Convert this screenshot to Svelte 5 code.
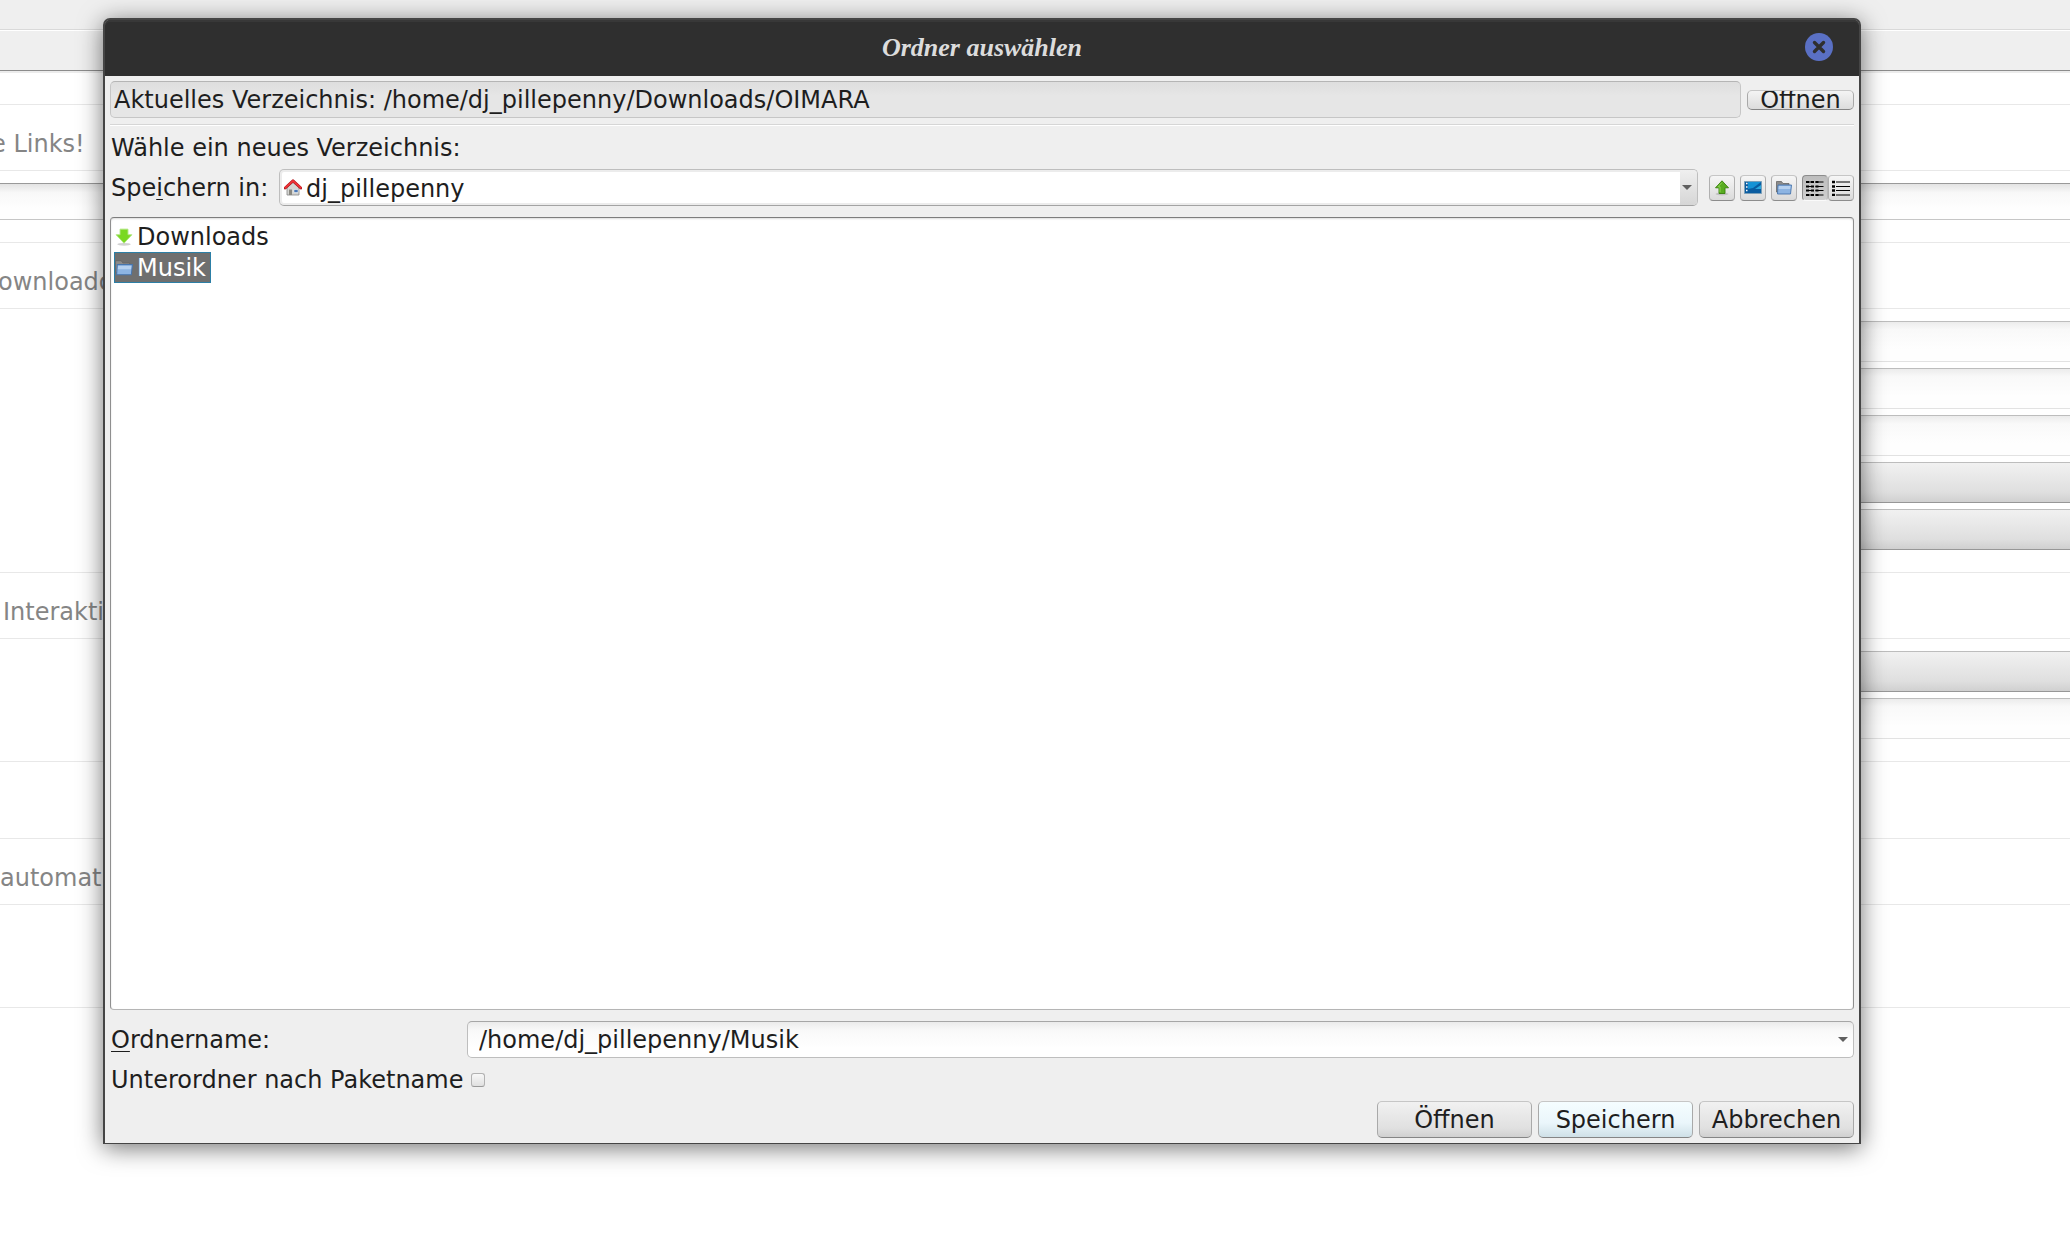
<script lang="ts">
  type Control = 'field' | 'button';
  type Section = { caption: string; indent: number; wide: boolean; controls: Control[] };

  const upper: Section[] = [
    { caption: 'e Links!', indent: -9, wide: true, controls: ['field'] },
    {
      caption: 'ownloado',
      indent: -2,
      wide: false,
      controls: ['field', 'field', 'field', 'button', 'button']
    },
    { caption: 'Interaktio', indent: 3, wide: false, controls: ['button', 'field'] }
  ];

  const entries = ['Downloads', 'Musik'];
  const actions = ['Öffnen', 'Speichern', 'Abbrechen'];

  let selected = $state('Musik');
  let view = $state('list');
  let subfolder = $state(false);
  let folder = $derived(`/home/dj_pillepenny/${selected}`);
</script>

{#snippet folderIcon()}
  <path d="M.5 12V1.500h5l1.500 2h6V12z" fill="#8b8b8b" stroke="#666" stroke-width=".8" />
  <path d="M2 5h13.500L14.500 14H1.500z" fill="#8db4e2" stroke="#4775ad" stroke-width=".9" />
  <path d="M2.800 6h11.800l-.4 3H2.500z" fill="#b5d0ef" />
{/snippet}

<div class="desktop">
  <div class="strip"></div>
  <div class="strip tabs"></div>

  <main class="settings">
    {#each upper as section}
      <section>
        <h2><span style="margin-left: {section.indent}px">{section.caption}</span></h2>
        <div class="controls" class:wide={section.wide}>
          {#each section.controls as control}
            <div class={control}></div>
          {/each}
        </div>
      </section>
    {/each}
    <div class="spacer"></div>
    <section class="last">
      <h2><span>automatis</span></h2>
    </section>
  </main>

  <div class="dialog" role="dialog" aria-labelledby="dialog-title">
    <header>
      <h1 id="dialog-title">Ordner auswählen</h1>
      <button class="close" aria-label="Schließen">
        <svg viewBox="0 0 28 28">
          <circle cx="14" cy="14" r="14" fill="#5a70c4" />
          <path d="M9.500 9.500l9 9M18.500 9.500l-9 9" stroke="#2f2f2f" stroke-width="3.400" stroke-linecap="round" />
        </svg>
      </button>
    </header>

    <div class="content">
      <div class="row">
        <div class="current">Aktuelles Verzeichnis: /home/dj_pillepenny/Downloads/OIMARA</div>
        <button class="push flat">Öffnen</button>
      </div>
      <hr />
      <p>Wähle ein neues Verzeichnis:</p>

      <div class="row">
        <label class="in-label" for="location">Spe<u>i</u>chern in:</label>
        <div class="combo location">
          <svg class="icon" viewBox="0 0 18 18">
            <path d="M3 8.500L9 3.500l6 5V16H3z" fill="#d5d5d2" stroke="#858585" stroke-width=".8" />
            <path d="M5 10.500h3V16H5z" fill="#8a8881" />
            <path d="M10 10.500h4v3h-4z" fill="#4a78b8" stroke="#fff" stroke-width=".5" />
            <path d="M1.200 9L9 1.800 16.800 9" fill="none" stroke="#b01218" stroke-width="2.800" stroke-linejoin="round" stroke-linecap="round" />
            <path d="M1.400 8.700L9 1.800 16.600 8.700" fill="none" stroke="#f03438" stroke-width="1.800" stroke-linejoin="round" stroke-linecap="round" />
          </svg>
          <select id="location">
            <option>dj_pillepenny</option>
          </select>
          <span class="drop"><i class="arrow"></i></span>
        </div>
        <div class="tools">
          <button aria-label="Übergeordneter Ordner">
            <svg viewBox="0 0 18 16">
              <ellipse cx="9" cy="14" rx="6.500" ry="1.500" fill="#000" opacity=".14" />
              <path d="M9 .8L15.500 7.800H12v5.700H6V7.800H2.500z" fill="#58ac20" stroke="#37800b" stroke-width=".9" stroke-linejoin="round" />
              <path d="M9 2.500L5 6.800h2v5.500" stroke="#8cd450" />
            </svg>
          </button>
          <button aria-label="Schreibtisch">
            <svg viewBox="0 0 18 16">
              <path d="M.5 1.500h17v12H.5z" fill="#0a5ca0" stroke="#7b9fb8" />
              <path d="M4 2h13L9 8l-5 1z" fill="#1692d4" />
              <path d="M11 9l6-4v4z" fill="#29a7dc" />
              <path d="M2 3.500h1.500M2 7h1.500M2 10.500h1.500" stroke="#fff" stroke-width="1.500" />
            </svg>
          </button>
          <button aria-label="Neuer Ordner">
            <svg viewBox="0 0 16 16">{@render folderIcon()}</svg>
          </button>
          <div class="views">
            <button class:pressed={view === 'list'} aria-label="Liste" onclick={() => (view = 'list')}>
              <svg viewBox="0 0 18 16">
                <path d="M0 2h8M0 6.500h8M0 10.500h8M0 15h8M9.500 2h8M9.500 6.500h8M9.500 10.500h8M9.500 15h8" stroke="#000" />
                <path d="M0 2h3M0 6.500h3M0 10.500h3M0 15h3M5 2h3M5 6.500h3M5 10.500h3M5 15h3M9.500 2h3M9.500 6.500h3M9.500 10.500h3M9.500 15h3" stroke="#000" stroke-width="2" />
              </svg>
            </button>
            <button class:pressed={view === 'details'} aria-label="Details" onclick={() => (view = 'details')}>
              <svg viewBox="0 0 18 16">
                <path d="M4 2h14M4 6.500h14M4 10.500h14M4 15h14" stroke="#000" />
                <path d="M0 2h3M0 6.500h3M0 10.500h3M0 15h3" stroke="#000" stroke-width="2.400" />
              </svg>
            </button>
          </div>
        </div>
      </div>

      <div class="files">
        {#each entries as entry (entry)}
          <button class="entry" class:selected={selected === entry} onclick={() => (selected = entry)}>
            <svg class="icon" viewBox="0 0 16 16">
              {#if entry === 'Downloads'}
                <ellipse cx="8" cy="14.500" rx="6" ry="1.200" fill="#000" opacity=".18" />
                <path d="M4.500 1h7v5H15L8 13.500 1 6h3.500z" fill="#7ad822" stroke="#aee57c" stroke-width=".8" />
              {:else}
                {@render folderIcon()}
              {/if}
            </svg>
            <span>{entry}</span>
          </button>
        {/each}
      </div>

      <div class="row">
        <label class="name-label" for="folder"><u>O</u>rdnername:</label>
        <div class="combo name">
          <input id="folder" type="text" value={folder} />
          <i class="arrow"></i>
        </div>
      </div>
      <div class="row">
        <label class="name-label" for="subfolder">Unterordner nach Paketname</label>
        <input id="subfolder" type="checkbox" bind:checked={subfolder} />
      </div>
      <div class="row actions">
        {#each actions as action}
          <button class="push" class:default={action === 'Speichern'}>{action}</button>
        {/each}
      </div>
    </div>
  </div>
</div>

<style>
  :global(body) {
    margin: 0;
    background: #fff;
  }
  .desktop {
    position: relative;
    min-height: 100vh;
    overflow: hidden;
    background: #fff;
    color: #1e1e1e;
    font: 24px/31px 'DejaVu Sans', sans-serif;
  }
  .desktop * {
    box-sizing: border-box;
  }
  button,
  input,
  select {
    margin: 0;
    padding: 0;
    color: inherit;
    font: inherit;
  }
  h1,
  h2,
  p {
    margin: 0;
    font-size: inherit;
    font-weight: normal;
  }
  svg {
    display: block;
    fill: none;
  }

  /* window behind the dialog */
  .strip {
    height: 30px;
    border-bottom: 1px solid #d9d9d9;
    background: #efefef;
  }
  .tabs {
    height: 43px;
    border-top: 1px solid #fff;
    border-bottom: 2px solid #ececec;
    box-shadow: inset 0 -1px #8c8c8c;
  }
  .settings {
    padding-top: 31px;
  }
  h2 {
    display: flex;
    align-items: center;
    height: 67px;
    padding-top: 14px;
    border: solid #e8e8e8;
    border-width: 1px 0;
    color: #858585;
    white-space: nowrap;
  }
  .controls {
    display: grid;
    gap: 6px;
    margin-left: 50%;
    padding: 12px 0 22px;
  }
  .field,
  .button {
    height: 41px;
    border: solid #bdbdbd;
    border-width: 1px 0;
  }
  .field {
    border-bottom-color: #e2e2e2;
    background: linear-gradient(#ececec, #f9f9f9 20%, #fefefe 70%);
  }
  .button {
    border-bottom-color: #979797;
    background: linear-gradient(#f1f1f1, #dfdfdf 75%, #d0d0d0);
  }
  .wide {
    margin-left: 0;
  }
  .wide .field {
    height: 37px;
    border-top-color: #999;
    border-bottom-color: #c6c6c6;
    background: linear-gradient(#e3e3e3, #f8f8f8 25%, #fefefe 70%);
  }
  .spacer {
    height: 77px;
    border-top: 1px solid #e8e8e8;
  }
  .last {
    height: 170px;
    border-bottom: 1px solid #e8e8e8;
  }

  .dialog {
    position: absolute;
    inset: 18px 209px 116px 103px;
    display: flex;
    flex-direction: column;
    border: solid #454545;
    border-width: 2px 2px 1px;
    border-radius: 7px 7px 0 0;
    background: #efefef;
    box-shadow: 0 4px 24px rgb(0 0 0 / 55%);
  }
  header {
    display: grid;
    grid-template-columns: 1fr auto 1fr;
    align-items: center;
    height: 56px;
    flex: none;
    padding-bottom: 2px;
    border-radius: 5px 5px 0 0;
    background: #2f2f2f;
    box-shadow: inset 0 2px #383838;
  }
  h1 {
    grid-column: 2;
    color: #dcdcdc;
    font: italic bold 26px/31px 'Liberation Serif', serif;
  }
  .close {
    justify-self: end;
    width: 28px;
    height: 28px;
    margin-right: 26px;
    border: 0;
    background: none;
  }
  .content {
    display: flex;
    flex: 1;
    flex-direction: column;
    gap: 6px;
    padding: 5px;
  }
  .row {
    display: flex;
    align-items: center;
    gap: 6px;
  }
  .current {
    flex: 1;
    height: 37px;
    padding: 3px;
    border: 1px solid #c6c6c6;
    border-top-color: #b5b5b5;
    border-radius: 5px;
    background: linear-gradient(#dedede, #e6e6e6 40%);
  }
  hr {
    width: 100%;
    height: 2px;
    margin: 0;
    border: 0;
    border-top: 1px solid #d6d6d6;
    background: #fff;
  }
  p,
  label {
    padding: 2px 0 0 1px;
    line-height: 29px;
  }
  u {
    text-decoration-thickness: 1px;
    text-underline-offset: 3px;
  }
  .in-label {
    flex: 0 0 163px;
    white-space: nowrap;
  }
  .name-label {
    flex: 0 0 351px;
    min-width: 0;
    white-space: nowrap;
  }

  .push {
    display: flex;
    align-items: center;
    justify-content: center;
    width: 155px;
    height: 37px;
    padding-top: 1px;
    border: 1px solid #a9a9a9;
    border-top-color: #c6c6c6;
    border-bottom-color: #858585;
    border-radius: 5px;
    background: linear-gradient(#f1f1f1, #e0e0e0 75%, #d0d0d0);
  }
  .flat {
    width: 107px;
    height: 20px;
    padding-top: 2px;
    overflow: hidden;
    background: linear-gradient(#f4f4f4, #dcdcdc);
  }
  .default {
    background: linear-gradient(#f5fdff, #eaf6fb 60%, #cfe0e7);
  }

  .combo {
    display: flex;
    flex: 1;
    align-items: center;
    height: 37px;
    border: 1px solid #bebebe;
    border-radius: 5px;
  }
  .combo select,
  .combo input {
    flex: 1;
    min-width: 0;
    height: 31px;
    padding-top: 2px;
    border: 0;
    outline: 0;
    background: none;
    appearance: none;
  }
  .location {
    gap: 4px;
    padding-left: 4px;
    border-bottom-color: #a3a3a3;
    background: #fff;
    box-shadow: inset 0 0 0 2px #ececec;
  }
  .icon {
    flex: none;
    width: 18px;
    height: 18px;
  }
  .drop {
    display: flex;
    align-items: center;
    align-self: stretch;
    width: 17px;
    padding-left: 2px;
    border-radius: 0 4px 4px 0;
    background: linear-gradient(#efefef, #d6d6d6);
  }
  .arrow {
    flex: none;
    border: 5px solid transparent;
    border-top-color: #606060;
    border-bottom: 0;
  }
  .name {
    padding: 0 5px 0 11px;
    border-top-color: #a6a6a6;
    background: linear-gradient(#ebebeb, #f9f9f9 25%, #fff 75%);
  }

  .tools {
    display: flex;
    gap: 5px;
    margin-left: 5px;
  }
  .tools button {
    display: grid;
    place-items: center;
    width: 26px;
    height: 26px;
    border: 1px solid #b0b0b0;
    border-top-color: #c6c6c6;
    border-bottom-color: #8c8c8c;
    border-radius: 4px;
    background: linear-gradient(#f6f6f6, #dadada);
  }
  .tools svg {
    width: 18px;
    height: 16px;
  }
  .views {
    display: flex;
  }
  .tools .pressed {
    border-color: #8c8c8c #b8b8b8 #fafafa #8c8c8c;
    background: linear-gradient(#bdbdbd, #cfcfcf);
  }

  .files {
    display: flex;
    flex: 1;
    flex-direction: column;
    align-items: flex-start;
    margin: 5px 0;
    padding: 3px;
    border: 1px solid #8f8f8f;
    border-top-color: #7d7d7d;
    border-bottom-color: #b5b5b5;
    border-radius: 4px;
    background: #fff;
    box-shadow: inset 0 1px 2px #dcdcdc;
  }
  .entry {
    display: flex;
    align-items: center;
    gap: 4px;
    height: 31px;
    padding: 0 4px 0 0;
    border: 1px solid transparent;
    background: none;
  }
  .entry span {
    padding-top: 2px;
  }
  .selected {
    border-color: #2c7fa6;
    background: #6f6f6f;
    color: #fff;
  }
  input[type='checkbox'] {
    width: 14px;
    height: 14px;
    margin-left: 4px;
    border: 1px solid #b2b2b2;
    border-bottom-color: #989898;
    border-radius: 3px;
    background: linear-gradient(#f8f8f8, #e0e0e0);
    appearance: none;
  }
  input[type='checkbox']:checked {
    background: #606060;
  }
  .actions {
    justify-content: flex-end;
  }
</style>
